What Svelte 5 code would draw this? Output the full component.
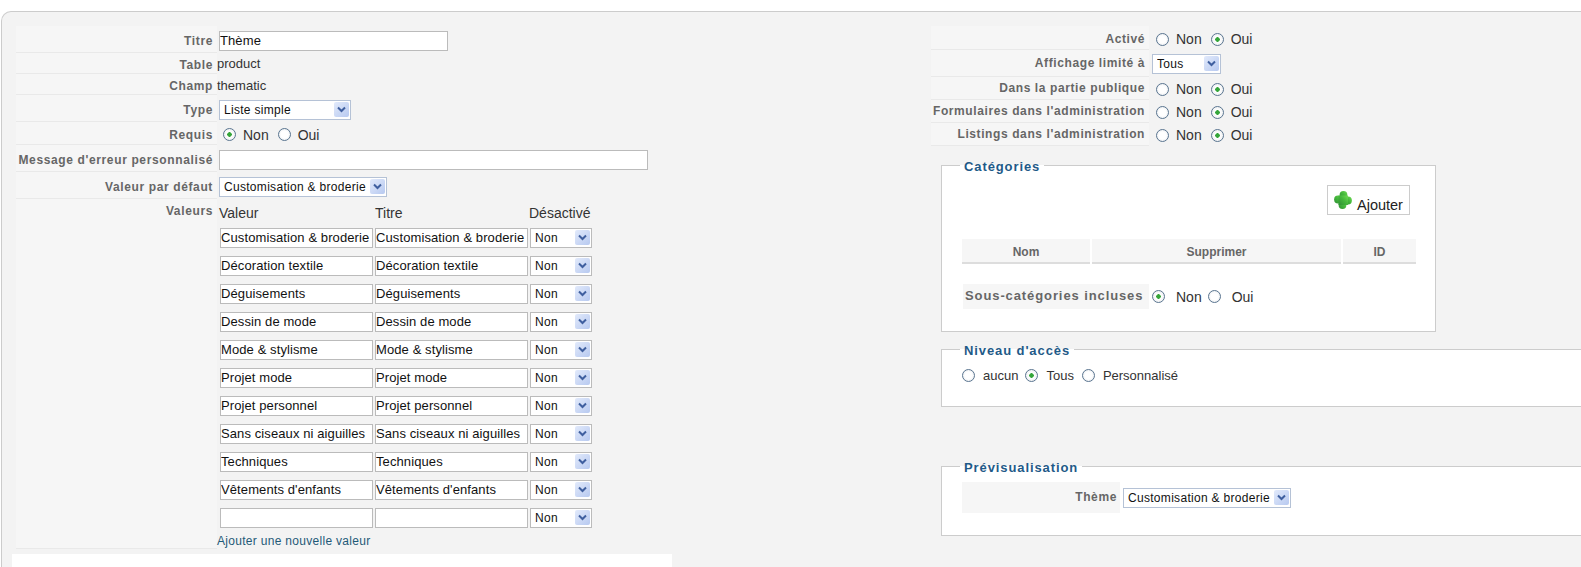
<script>
  const values = [
    'Customisation & broderie',
    'Décoration textile',
    'Déguisements',
    'Dessin de mode',
    'Mode & stylisme',
    'Projet mode',
    'Projet personnel',
    'Sans ciseaux ni aiguilles',
    'Techniques',
    "Vêtements d'enfants",
    ''
  ];

  const flags = [
    { label: 'Dans la partie publique', name: 'public' },
    { label: "Formulaires dans l'administration", name: 'forms' },
    { label: "Listings dans l'administration", name: 'listings' }
  ];
</script>

{#snippet dropdown(text, cls)}
  <span class="select {cls}">
    <select><option>{text}</option></select>
    <svg class="arrow" viewBox="0 0 15 15" width="15" height="15" aria-hidden="true">
      <path d="M4 5.5 L7.5 9 L11 5.5" fill="none" stroke="#3f5f9f" stroke-width="2" />
    </svg>
  </span>
{/snippet}

{#snippet yesNo(name, yes)}
  <span class="radios">
    <label class="radio"><input type="radio" {name} checked={!yes} /><span>Non</span></label>
    <label class="radio"><input type="radio" {name} checked={yes} /><span>Oui</span></label>
  </span>
{/snippet}

<div class="panel">
  <div class="left">
    <div class="row h26">
      <div class="key">Titre</div>
      <div class="val"><input class="text title" type="text" value="Thème" /></div>
    </div>
    <div class="row h20">
      <div class="key">Table</div>
      <div class="val plain">product</div>
    </div>
    <div class="row h20">
      <div class="key">Champ</div>
      <div class="val plain">thematic</div>
    </div>
    <div class="row h26">
      <div class="key">Type</div>
      <div class="val">{@render dropdown('Liste simple', 'w-type')}</div>
    </div>
    <div class="row h22">
      <div class="key">Requis</div>
      <div class="val">{@render yesNo('required', false)}</div>
    </div>
    <div class="row h26">
      <div class="key">Message d'erreur personnalisé</div>
      <div class="val"><input class="text message" type="text" /></div>
    </div>
    <div class="row h26">
      <div class="key">Valeur par défaut</div>
      <div class="val">{@render dropdown('Customisation & broderie', 'w-theme')}</div>
    </div>
    <div class="row values">
      <div class="key">Valeurs</div>
      <div class="val">
        <div class="grid-head">
          <span>Valeur</span><span>Titre</span><span>Désactivé</span>
        </div>
        {#each values as v}
          <div class="grid-row">
            <input class="text cell" type="text" value={v} />
            <input class="text cell" type="text" value={v} />
            {@render dropdown('Non', 'w-non')}
          </div>
        {/each}
        <a class="add" href="/">Ajouter une nouvelle valeur</a>
      </div>
    </div>
    <div class="left-foot"></div>
  </div>

  <div class="right">
    <div class="flags">
      <div class="row r-first">
        <div class="key">Activé</div>
        <div class="val">{@render yesNo('active', true)}</div>
      </div>
      <div class="row r-limit">
        <div class="key">Affichage limité à</div>
        <div class="val">{@render dropdown('Tous', 'w-tous')}</div>
      </div>
      {#each flags as f}
        <div class="row r-flag">
          <div class="key">{f.label}</div>
          <div class="val">{@render yesNo(f.name, true)}</div>
        </div>
      {/each}
    </div>

    <fieldset class="categories">
      <legend>Catégories</legend>
      <div class="toolbar">
        <button class="add-btn" type="button">
          <svg viewBox="0 0 18 18" width="18" height="18" aria-hidden="true">
            <defs>
              <linearGradient id="blob" x1="0" y1="1" x2="1" y2="0">
                <stop offset="0" stop-color="#2f8f35" />
                <stop offset=".55" stop-color="#45b83c" />
                <stop offset="1" stop-color="#72dc55" />
              </linearGradient>
            </defs>
            <g fill="url(#blob)">
              <circle cx="9.5" cy="4" r="3.9" />
              <circle cx="14" cy="9.5" r="3.9" />
              <circle cx="8.5" cy="14" r="3.9" />
              <circle cx="4" cy="8.5" r="3.9" />
              <rect x="4.5" y="4.5" width="9.5" height="9.5" />
            </g>
          </svg>
          <span>Ajouter</span>
        </button>
      </div>
      <div class="cat-head">
        <div class="nom">Nom</div>
        <div class="sup">Supprimer</div>
        <div class="id">ID</div>
      </div>
      <div class="sub">
        <div class="sub-key">Sous-catégories incluses</div>
        {@render yesNo('sub', false)}
      </div>
    </fieldset>

    <fieldset class="access">
      <legend>Niveau d'accès</legend>
      <div class="access-row">
        <label class="radio"><input type="radio" name="access" /><span>aucun</span></label>
        <label class="radio"><input type="radio" name="access" checked /><span>Tous</span></label>
        <label class="radio"><input type="radio" name="access" /><span>Personnalisé</span></label>
      </div>
    </fieldset>

    <fieldset class="preview">
      <legend>Prévisualisation</legend>
      <div class="preview-row">
        <div class="preview-key">Thème</div>
        {@render dropdown('Customisation & broderie', 'w-theme')}
      </div>
    </fieldset>
  </div>
</div>

<style>
  :global(body) {
    background: #fff;
    overflow: hidden;
  }

  .panel {
    box-sizing: border-box;
    height: 567px;
    margin-top: 11px;
    margin-left: 1px;
    width: 1600px;
    background: #f3f3f3;
    border: 1px solid #ccc;
    border-bottom: 0;
    border-radius: 10px 0 0 0;
    display: flex;
    font-family: "Liberation Sans", Arial, sans-serif;
    font-size: 12px;
    color: #222;
    padding-top: 14px;
  }

  .left {
    width: 660px;
    margin-left: 10px;
    flex: none;
  }

  .row {
    display: flex;
    box-sizing: border-box;
  }
  .h26 { height: 27px; }
  .h20 { height: 21px; }
  .h22 { height: 23px; }

  .key {
    flex: none;
    box-sizing: border-box;
    width: 201px;
    margin-left: 4px;
    padding: 2px 4px 0 0;
    background: #f6f6f6;
    border-bottom: 1px solid #e9e9e9;
    text-align: right;
    font-weight: bold;
    color: #666;
    line-height: 26px;
    letter-spacing: .63px;
    white-space: nowrap;
  }

  .h20 .key { line-height: 20px; }
  .h22 .key { line-height: 22px; }

  .val {
    flex: 1;
    padding: 2px 0 0 1px;
    display: flex;
    align-items: center;
  }
  .val.plain {
    padding: 0;
    font-size: 13px;
    color: #333;
  }
  .h20:nth-child(3) .val.plain {
    padding-top: 2px;
  }

  .text {
    box-sizing: border-box;
    height: 20px;
    border: 1px solid #bbb;
    background: #fff;
    margin: 0;
    padding: 0;
    font: 13px "Liberation Sans", Arial, sans-serif;
    color: #111;
    letter-spacing: .1px;
  }
  .cell { padding-bottom: 2px; }
  .title { width: 229px; margin-left: 1px; }
  .message { width: 429px; margin-left: 1px; }

  .select {
    position: relative;
    display: inline-block;
    box-sizing: border-box;
    height: 20px;
    margin-left: 1px;
    flex: none;
  }
  .select select {
    appearance: none;
    box-sizing: border-box;
    width: 100%;
    height: 20px;
    margin: 0;
    padding: 0 0 0 4px;
    border: 1px solid #b5c2d6;
    border-radius: 0;
    background: #fff;
    font: 12px "Liberation Sans", Arial, sans-serif;
    color: #111;
    letter-spacing: .3px;
  }
  .arrow {
    position: absolute;
    right: 2px;
    top: 2px;
    background: linear-gradient(135deg, #e2eafb, #b7c9f0);
    border-radius: 2px;
    pointer-events: none;
  }
  .w-type { width: 132px; }
  .w-theme { width: 168px; }
  .w-non { width: 62px; margin-left: 2px; }
  .w-tous { width: 69px; }

  .w-non select { border-color: #bbb; }

  .radios {
    display: inline-flex;
    align-items: center;
    gap: 4px;
  }
  .radio {
    display: inline-flex;
    align-items: center;
    font-size: 14px;
    color: #333;
  }
  .radio input {
    appearance: none;
    box-sizing: border-box;
    width: 13px;
    height: 13px;
    margin: 0 7px 0 5px;
    border: 1px solid #5a7590;
    border-radius: 50%;
    background: radial-gradient(circle, #fff 45%, #dde1e6 100%);
  }
  .radio input:checked {
    background: radial-gradient(circle, #35a53a 0 2px, #fff 2.5px, #e6e8ea 100%);
  }

  .values .val {
    display: block;
    padding: 0;
  }
  .values {
    height: 350px;
  }
  .values .key {
    line-height: 20px;
    height: 350px;
  }

  .grid-head {
    display: grid;
    grid-template-columns: 156px 154px 62px;
    padding-left: 2px;
    font-size: 14px;
    line-height: 14px;
    padding-top: 7px;
    height: 18px;
    box-sizing: content-box;
    color: #333;
  }
  .grid-row {
    display: flex;
    align-items: center;
    gap: 2px;
    height: 28px;
    padding-left: 3px;
  }
  .cell { width: 153px; }
  .grid-row .select { margin-left: 0; }

  .add {
    display: block;
    margin-top: 2px;
    color: #1f5a78;
    text-decoration: none;
    letter-spacing: .3px;
  }

  .left-foot {
    height: 40px;
    background: #fff;
    margin-top: 5px;
  }

  .right {
    margin-left: 259px;
    width: 660px;
    flex: none;
  }

  .r-first { height: 24px; }
  .r-limit { height: 27px; }
  .r-flag { height: 23px; }

  .flags .key {
    width: 218px;
    margin-left: 0;
    line-height: 22px;
    padding-top: 0;
    letter-spacing: .6px;
  }
  .flags .r-first .key { padding-top: 2px; }
  .r-first .val { padding-top: 2px; }
  .r-limit .key { line-height: 26px; }
  .flags .val { padding-left: 2px; }
  .r-limit .val { padding-top: 0; }
  .r-flag .val { padding-top: 1px; }

  fieldset {
    margin: 0;
    background: #fff;
    border: 1px solid #ccc;
    box-sizing: border-box;
    padding: 0;
    margin-left: 10px;
  }
  legend {
    position: relative;
    top: 1px;
    margin-left: 18px;
    padding: 0 4px;
    color: #1f5a88;
    font-weight: bold;
    letter-spacing: .9px;
    font-size: 13px;
  }

  .categories {
    width: 495px;
    height: 174px;
    margin-top: 12px;
  }
  .toolbar {
    display: flex;
    justify-content: flex-end;
    padding: 12px 25px 0 0;
  }
  .add-btn {
    display: flex;
    align-items: center;
    gap: 5px;
    height: 30px;
    width: 83px;
    padding: 0 0 0 6px;
    background: #fff;
    border: 1px solid #ccc;
    font: 14.5px "Liberation Sans", Arial, sans-serif;
    color: #222;
  }
  .add-btn span {
    margin-top: 9px;
  }
  .cat-head {
    display: flex;
    gap: 2px;
    margin: 24px 0 0 20px;
    font-weight: bold;
    font-size: 12px;
    color: #666;
    text-align: center;
  }
  .cat-head div {
    box-sizing: border-box;
    height: 25px;
    line-height: 26px;
    background: #f6f6f6;
    border-bottom: 2px solid #ddd;
  }
  .nom { width: 128px; }
  .sup { width: 249px; }
  .id { width: 73px; }

  .sub {
    display: flex;
    align-items: center;
    margin: 20px 0 0 21px;
  }
  .sub-key {
    box-sizing: border-box;
    width: 186px;
    background: #f6f6f6;
    padding-left: 2px;
    height: 25px;
    line-height: 24px;
    font-size: 13px;
    font-weight: bold;
    color: #666;
    letter-spacing: .9px;
    white-space: nowrap;
  }
  .sub .radios { gap: 3px; }
  .sub .radio input { margin: 0 11px 0 3px; }

  .access {
    width: 700px;
    height: 65px;
    margin-top: 10px;
  }
  .access-row {
    display: flex;
    align-items: center;
    gap: 2px;
    padding: 11px 0 0 16px;
  }
  .access-row .radio { font-size: 13px; }
  .access-row .radio input { margin: 0 8px 0 4px; }
  .access-row .radio:nth-child(2) { margin: 0 2px 0 1px; }

  .preview {
    width: 700px;
    height: 77px;
    margin-top: 52px;
  }
  .preview-row {
    display: flex;
    align-items: center;
    margin: 8px 0 0 20px;
    gap: 2px;
  }
  .preview-row .select { margin-top: 1px; }
  .preview-key {
    width: 158px;
    height: 31px;
    box-sizing: border-box;
    text-align: right;
    line-height: 30px;
    padding-right: 3px;
    background: #f6f6f6;
    font-weight: bold;
    color: #666;
    letter-spacing: .63px;
  }
</style>
